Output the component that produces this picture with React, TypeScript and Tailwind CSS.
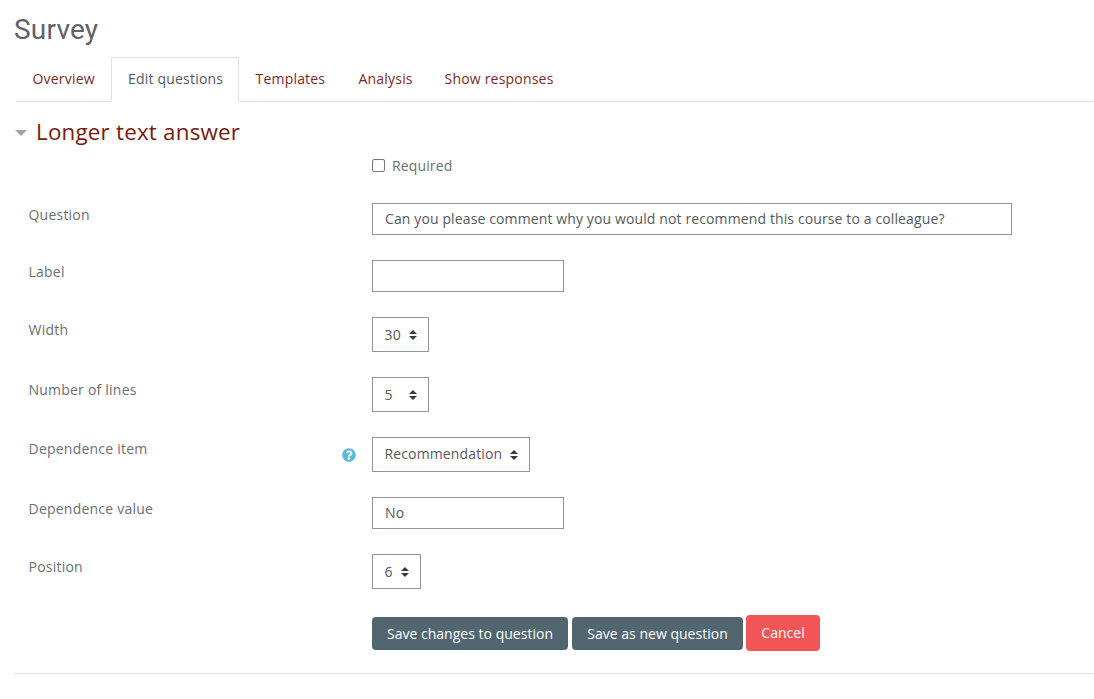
const font = "font-['Open_Sans',sans-serif]";

function Row({ label, help, children, className, labelTop = "mt-[1px]" }: { label?: string; help?: boolean; children: React.ReactNode; className: string; labelTop?: string }) {
  return (
    <div className={`flex ${className}`}>
      <div className="w-[358px] pl-[14.5px] flex justify-between text-[14px] tracking-[0.22px] leading-[21px] text-[#6a6f73] pr-[16px]">
        <span className={labelTop}>{label}</span>
        {help && (
          <svg viewBox="0 0 512 512" className="w-[14px] h-[14px] mt-[11px] fill-[#5bb8d8]">
            <path d="M504 256c0 137-111 248-248 248S8 393 8 256 119 8 256 8s248 111 248 248zM262.700 90c-54.500 0-89.300 23-116.600 63.800-3.500 5.300-2.400 12.400 2.700 16.300l34.700 26.300c5.200 3.900 12.600 3 16.700-2.100 17.900-22.700 30.100-35.800 57.300-35.800 20.400 0 45.700 13.100 45.700 32.900 0 15-12.400 22.700-32.600 34-23.600 13.200-54.800 29.700-54.800 70.900V300c0 6.600 5.400 12 12 12h56c6.600 0 12-5.400 12-12v-1.300c0-28.600 83.500-29.800 83.500-107.200 0-58.300-60.500-102.500-117.200-102.500zM256 339c-25.400 0-46 20.600-46 46s20.600 46 46 46 46-20.600 46-46-20.600-46-46-46z" />
          </svg>
        )}
      </div>
      <div>{children}</div>
    </div>
  );
}

function Sort() {
  return (
    <svg viewBox="0 0 8 12" className="w-[8px] h-[12px] fill-[#373a3c]">
      <path d="M4 1 L8 5 H0 Z M0 7 H8 L4 11 Z" />
    </svg>
  );
}

function Select({ value, w, textClass = "" }: { value: string; w: string; textClass?: string }) {
  return (
    <div className={`${w} h-[35px] border border-[#8f959e] bg-white flex items-center justify-between pl-[11.5px] pr-[11px] text-[14px] text-[#55595c]`}>
      <span className={textClass}>{value}</span>
      <Sort />
    </div>
  );
}

function Input({ value, w }: { value?: string; w: string }) {
  return (
    <input
      readOnly
      value={value ?? ""}
      className={`${w} block h-[32px] border border-[#8f959e] bg-white pl-[12px] pr-[12px] pb-[2px] text-[14px] tracking-[0.12px] text-[#55595c] outline-none`}
    />
  );
}

function Tab({ children, active, w }: { children: React.ReactNode; active?: boolean; w: string }) {
  return active ? (
    <div className={`${w} h-[45px] -mb-[1px] pl-[16px] pt-[10px] border border-[#dee2e6] border-b-white bg-white text-[14px] text-[#55595c] leading-[21px] whitespace-nowrap`}>
      {children}
    </div>
  ) : (
    <div className={`${w} h-[44px] pl-[16.5px] pt-[11px] text-[14px] leading-[21px] text-[#7a2a2a] whitespace-nowrap`}>{children}</div>
  );
}

export default function App() {
  return (
    <div className={`${font} tracking-[0.13px] w-[1094px] h-[699px] bg-white overflow-hidden pl-[14px]`}>
      <h1 className="font-['Roboto',sans-serif] text-[28px] tracking-[0.2px] leading-[34px] text-[#5f6368] pt-[13px] h-[57px]">Survey</h1>
      <div className="ml-[2px] flex items-end h-[45px] border-b border-[#dee2e6] tracking-[0.2px]">
        <Tab w="w-[95px]">Overview</Tab>
        <Tab active w="w-[128px]">Edit questions</Tab>
        <Tab w="w-[103px]">Templates</Tab>
        <Tab w="w-[86px]">Analysis</Tab>
        <Tab w="w-[140px]">Show responses</Tab>
      </div>
      <div className="flex items-center mt-[14px] h-[32px]">
        <div className="ml-[1px] mt-[1px] w-0 h-0 border-x-[6px] border-x-transparent border-t-[6px] border-t-[#a3a3a3]" />
        <h2 className="ml-[9px] text-[22.4px] tracking-[0.2px] leading-[32px] text-[#7a1a10]">Longer text answer</h2>
      </div>
      <div className="flex items-center mt-[7px] ml-[358px] h-[21px]">
        <div className="w-[13px] h-[13px] rounded-[2px] border border-[#767676] bg-white" />
        <span className="ml-[7px] text-[14px] text-[#6a6f73]">Required</span>
      </div>
      <Row label="Question" className="mt-[27px]"><Input w="w-[640px]" value="Can you please comment why you would not recommend this course to a colleague?" /></Row>
      <Row label="Label" className="mt-[25px]"><Input w="w-[192px]" /></Row>
      <Row label="Width" labelTop="mt-[2px]" className="mt-[25px]"><Select value="30" w="w-[57px]" /></Row>
      <Row label="Number of lines" labelTop="mt-[2px]" className="mt-[25px]"><Select value="5" w="w-[57px]" /></Row>
      <Row label="Dependence item" help className="mt-[25px]"><Select value="Recommendation" textClass="-mt-[2px]" w="w-[158px]" /></Row>
      <Row label="Dependence value" className="mt-[25px]"><Input w="w-[192px]" value="No" /></Row>
      <Row label="Position" labelTop="mt-[2px]" className="mt-[25px]"><Select value="6" w="w-[49px]" /></Row>
      <div className="flex items-center mt-[26px] ml-[358px] h-[36px] tracking-[0.02px]">
        <button className="h-[33px] mt-[1px] pb-[1px] w-[196px] rounded-[4px] bg-[#51666e] text-white text-[14px]">Save changes to question</button>
        <button className="h-[33px] mt-[1px] pb-[1px] ml-[4px] w-[171px] rounded-[4px] bg-[#51666e] text-white text-[14px]">Save as new question</button>
        <button className="h-[36px] ml-[3px] w-[74px] pb-[2px] rounded-[4px] bg-[#f25555] text-white text-[14px]">Cancel</button>
      </div>
      <div className="mt-[22px] border-t border-[#dee2e6]" />
    </div>
  );
}
